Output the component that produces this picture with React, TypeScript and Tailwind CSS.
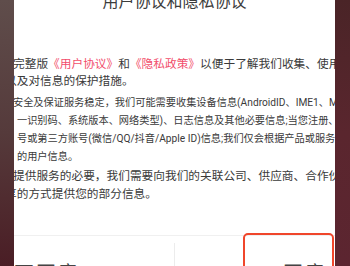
const cjk = { fontFamily: 'Roboto, "Noto Sans CJK SC", sans-serif' };

export default function App() {
  return (
    <div className="flex w-[350px] h-[266px] overflow-hidden" style={cjk}>
      {/* backdrop, left */}
      <div className="w-[14px] shrink-0 bg-gradient-to-b from-[#5f4d4b] via-[#553a3b] to-[#4a1d25]" />

      {/* dialog */}
      <div className="relative flex-1 flex flex-col overflow-hidden bg-white text-[#3a3a3a]">
        <div className="-mt-[6px] h-[16px] text-center text-[16px] leading-[16px] text-[#3c3c3c]">
          用户协议和隐私协议
        </div>

        <div className="mt-[46px] text-[11.7px] leading-[17px] whitespace-nowrap">
          <div className="-ml-[1px]">
            完整版<span className="text-[#f24e6c]">《用户协议》</span>和<span className="text-[#f24e6c]">《隐私政策》</span>以便于了解我们收集、使用
          </div>
          <div className="-ml-[9px]">以及对信息的保护措施。</div>
        </div>

        <div className="mt-[4px] text-[10.2px] leading-[18px] whitespace-nowrap">
          <div className="-ml-[1px]">安全及保证服务稳定，我们可能需要收集设备信息(AndroidID、IME1、MAC</div>
          <div className="ml-[3px]">一识别码、系统版本、网络类型)、日志信息及其他必要信息;当您注册、</div>
          <div className="ml-[3px]">号或第三方账号(微信/QQ/抖音/Apple ID)信息;我们仅会根据产品或服务</div>
          <div className="ml-[3px]">的用户信息。</div>
        </div>

        <div className="mt-[2px] text-[11.7px] leading-[17.5px] whitespace-nowrap">
          <div className="-ml-[1px]">提供服务的必要，我们需要向我们的关联公司、供应商、合作伙伴</div>
          <div className="-ml-[9px]">享的方式提供您的部分信息。</div>
        </div>

        <div className="mt-auto h-[31px] shrink-0 flex border-t border-[#f0f0f0]">
          <div className="w-[161px] border-r border-[#ececec] mt-[7px] pt-[21px] text-[20px] leading-[20px] tracking-[2px] text-[#444] whitespace-nowrap">
            不同意
          </div>
          <div className="flex-1 pl-[108px] pt-[28px] text-[20px] leading-[20px] tracking-[2px] text-[#444] whitespace-nowrap">
            同意
          </div>
        </div>

        {/* highlight box drawn over the confirm button */}
        <div className="absolute left-[229px] top-[233px] w-[91px] h-[44px] border-2 border-[#f0462b] rounded-[5px]" />
      </div>

      {/* backdrop, right */}
      <div className="w-[15px] shrink-0 bg-gradient-to-b from-[#4a2427] via-[#5a262e] to-[#5c2530]" />
    </div>
  );
}
